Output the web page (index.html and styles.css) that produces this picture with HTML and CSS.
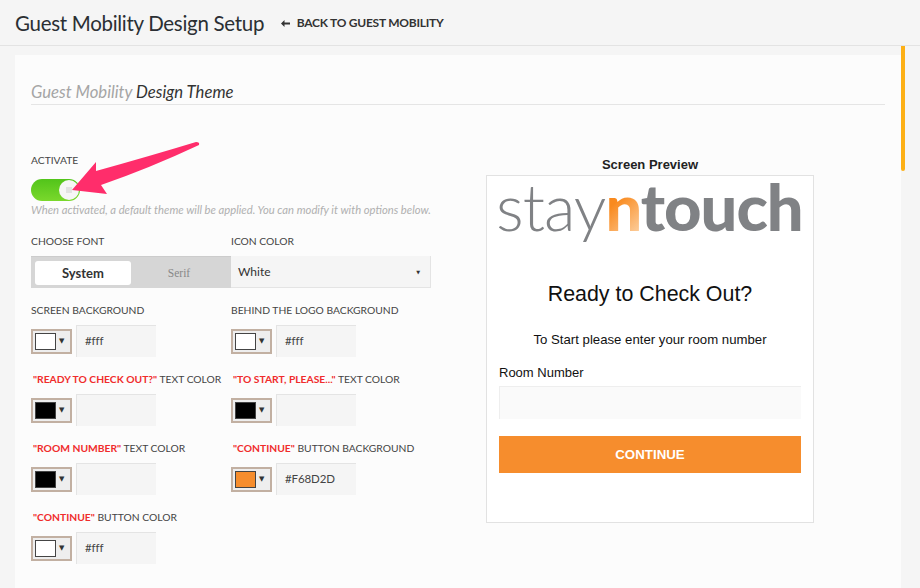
FILE: index.html
```html
<!DOCTYPE html>
<html lang="en">
<head>
  <meta charset="UTF-8">
  <title>Guest Mobility Design Setup</title>
  <link rel="stylesheet" href="styles.css">
</head>
<body>
  <header class="top-bar">
    <h1 class="page-title">Guest Mobility Design Setup</h1>
    <a class="back-link" href="#">
      <svg class="back-arrow" width="9" height="7" viewBox="0 0 9 7"><path d="M0 3.5 L3.5 0 V2.5 H9 V4.5 H3.5 V7 Z" fill="#333"/></svg>
      BACK TO GUEST MOBILITY
    </a>
  </header>

  <main class="panel">
    <h2 class="section-title"><span class="muted">Guest Mobility</span> Design Theme</h2>

    <div class="columns">
      <section class="form">
        <div class="field-label">ACTIVATE</div>
        <div class="toggle"><span class="knob"></span></div>
        <p class="hint">When activated, a default theme will be applied. You can modify it with options below.</p>

        <div class="grid">
          <div class="field">
            <div class="field-label">CHOOSE FONT</div>
            <div class="font-switch">
              <span class="font-on">System</span>
              <span class="font-off">Serif</span>
            </div>
          </div>
          <div class="field">
            <div class="field-label">ICON COLOR</div>
            <div class="select">White<span class="caret">&#9660;</span></div>
          </div>

          <div class="field">
            <div class="field-label">SCREEN BACKGROUND</div>
            <div class="color-row">
              <div class="picker"><span class="swatch white"></span><span class="picker-caret">&#9660;</span></div>
              <div class="color-input">#fff</div>
            </div>
          </div>
          <div class="field">
            <div class="field-label">BEHIND THE LOGO BACKGROUND</div>
            <div class="color-row">
              <div class="picker"><span class="swatch white"></span><span class="picker-caret">&#9660;</span></div>
              <div class="color-input">#fff</div>
            </div>
          </div>

          <div class="field">
            <div class="field-label"><b>"READY TO CHECK OUT?"</b> TEXT COLOR</div>
            <div class="color-row">
              <div class="picker"><span class="swatch black"></span><span class="picker-caret">&#9660;</span></div>
              <div class="color-input"></div>
            </div>
          </div>
          <div class="field">
            <div class="field-label"><b>"TO START, PLEASE..."</b> TEXT COLOR</div>
            <div class="color-row">
              <div class="picker"><span class="swatch black"></span><span class="picker-caret">&#9660;</span></div>
              <div class="color-input"></div>
            </div>
          </div>

          <div class="field">
            <div class="field-label"><b>"ROOM NUMBER"</b> TEXT COLOR</div>
            <div class="color-row">
              <div class="picker"><span class="swatch black"></span><span class="picker-caret">&#9660;</span></div>
              <div class="color-input"></div>
            </div>
          </div>
          <div class="field">
            <div class="field-label"><b>"CONTINUE"</b> BUTTON BACKGROUND</div>
            <div class="color-row">
              <div class="picker"><span class="swatch orange"></span><span class="picker-caret">&#9660;</span></div>
              <div class="color-input">#F68D2D</div>
            </div>
          </div>

          <div class="field">
            <div class="field-label"><b>"CONTINUE"</b> BUTTON COLOR</div>
            <div class="color-row">
              <div class="picker"><span class="swatch white"></span><span class="picker-caret">&#9660;</span></div>
              <div class="color-input">#fff</div>
            </div>
          </div>
        </div>
      </section>

      <section class="preview">
        <div class="preview-title">Screen Preview</div>
        <div class="preview-box">
          <div class="logo"><span class="logo-stay">stay</span><span class="logo-n">n</span><span class="logo-touch">touch</span></div>
          <div class="preview-heading">Ready to Check Out?</div>
          <p class="preview-text">To Start please enter your room number</p>
          <div class="preview-label">Room Number</div>
          <div class="preview-input"></div>
          <div class="preview-button">CONTINUE</div>
        </div>
      </section>
    </div>

    <div class="scroll-thumb"></div>
  </main>

  <svg class="callout" width="220" height="70" viewBox="0 0 220 70">
    <path d="M72 60 L96 32 L96 41 Q150 26 196 12 Q200 12 199 15 Q150 38 101 55 L107 64 Z" fill="#ff2d6b"/>
  </svg>
</body>
</html>
```

FILE: styles.css
```css
html, body {
    margin: 0;
    height: 100%;
}

body {
    position: relative;
    height: 588px;
    overflow: hidden;
    background-color: #f5f5f5;
    font-family: Lato, "Open Sans", sans-serif;
    color: #333;
}

.top-bar {
    display: flex;
    align-items: center;
    height: 45px;
    padding-left: 15px;
    border-bottom: 1px solid #e3e3e3;
}

.page-title {
    margin: 0;
    font-size: 20.5px;
    font-weight: 400;
    letter-spacing: -0.3px;
    color: #2b2f33;
}

.back-link {
    margin-left: 17px;
    font-size: 12px;
    font-weight: 700;
    letter-spacing: -0.25px;
    color: #333;
    text-decoration: none;
}

.back-arrow {
    margin-right: 4px;
}

.panel {
    position: relative;
    height: 533px;
    margin: 9px 19px 0 15px;
    padding: 0 16px;
    background-color: #fcfcfc;
}

.section-title {
    margin: 0;
    padding: 27px 0 1px;
    height: 21px;
    border-bottom: 1px solid #e5e5e5;
    font-size: 16.7px;
    font-style: italic;
    font-weight: 400;
    line-height: 21px;
    color: #333;
}

.muted {
    color: #a5a5a5;
}

.columns {
    display: flex;
}

.form {
    width: 400px;
    padding-top: 48px;
}

.field-label {
    height: 15px;
    font-size: 10.3px;
    line-height: 15px;
    white-space: nowrap;
    color: #444;
}

.field-label b {
    margin-left: 2px;
    color: #f02c2c;
}

.toggle {
    position: relative;
    width: 49px;
    height: 22px;
    margin-top: 11px;
    border-radius: 11px;
    background: linear-gradient(#52c41a, #7ad82c);
}

.knob {
    position: absolute;
    top: 1px;
    right: 1px;
    width: 20px;
    height: 20px;
    border-radius: 50%;
    background-color: #f6f6f6;
}

.knob::after {
    content: "";
    position: absolute;
    top: 7px;
    left: 7px;
    width: 6px;
    height: 6px;
    background-color: #e2e2e2;
}

.hint {
    margin: 1px 0 0;
    height: 16px;
    font-size: 11.25px;
    font-style: italic;
    line-height: 16px;
    white-space: nowrap;
    color: #b0b0b0;
}

.grid {
    display: grid;
    grid-template-columns: 200px 200px;
    row-gap: 15px;
    margin-top: 16px;
}

.font-switch {
    box-sizing: border-box;
    display: flex;
    align-items: center;
    height: 32px;
    margin-top: 7px;
    padding: 0 4px;
    border-top: 1px solid #ccc;
    background-color: #d6d6d6;
}

.font-on {
    width: 96px;
    height: 24px;
    border-radius: 3px;
    background-color: #fff;
    font-size: 13px;
    font-weight: 700;
    line-height: 24px;
    text-align: center;
    color: #333;
}

.font-off {
    flex: 1;
    font-family: "Liberation Serif", serif;
    font-size: 11.5px;
    text-align: center;
    color: #888;
}

.select {
    box-sizing: border-box;
    display: flex;
    justify-content: space-between;
    align-items: center;
    height: 32px;
    margin-top: 7px;
    padding: 0 10px 0 7px;
    border-right: 1px solid #e4e4e4;
    border-bottom: 1px solid #e4e4e4;
    background-color: #f5f5f5;
    font-size: 12px;
    color: #333;
}

.caret {
    font-family: "DejaVu Sans", sans-serif;
    font-size: 5px;
}

.color-row {
    display: flex;
    align-items: center;
    gap: 4px;
    height: 32px;
    margin-top: 7px;
}

.picker {
    display: flex;
    align-items: center;
    box-sizing: border-box;
    width: 41px;
    height: 25px;
    padding: 2px;
    border: 2px solid #c2b0a2;
    background-color: #eee;
}

.swatch {
    box-sizing: border-box;
    width: 21px;
    height: 17px;
    border: 1px solid #444;
}

.white {
    background-color: #fff;
}

.black {
    background-color: #000;
}

.orange {
    background-color: #f68d2d;
}

.picker-caret {
    margin-left: 3px;
    font-family: "DejaVu Sans", sans-serif;
    font-size: 7px;
    color: #333;
}

.color-input {
    box-sizing: border-box;
    width: 80px;
    height: 32px;
    padding-left: 8px;
    border-top: 1px solid #e4e4e4;
    border-left: 1px solid #e4e4e4;
    background-color: #f5f5f5;
    font-size: 11.5px;
    line-height: 30px;
    letter-spacing: -0.1px;
    color: #444;
}

.preview {
    width: 328px;
    margin-left: 55px;
    padding-top: 52px;
}

.preview-title {
    height: 15px;
    margin-bottom: 3px;
    font-family: "Liberation Sans", Arial, sans-serif;
    font-size: 13px;
    font-weight: 700;
    line-height: 15px;
    text-align: center;
    color: #222;
}

.preview-box {
    box-sizing: border-box;
    height: 348px;
    padding: 0 12px;
    border: 1px solid #e2e2e2;
    background-color: #fff;
    font-family: "Liberation Sans", Arial, sans-serif;
    color: #111;
}

.logo {
    height: 59px;
    margin: 1px 0 0 -3px;
    font-family: Lato, sans-serif;
    font-size: 65px;
    line-height: 59px;
    letter-spacing: -1px;
    white-space: nowrap;
    color: #808285;
}

.logo-stay {
    font-weight: 300;
}

.logo-n {
    font-weight: 900;
    background: linear-gradient(135deg, #f98a1e 40%, #fde0bf);
    -webkit-background-clip: text;
    background-clip: text;
    color: transparent;
}

.logo-touch {
    font-weight: 900;
}

.preview-heading {
    margin-top: 45px;
    font-size: 21.4px;
    line-height: 26px;
    text-align: center;
}

.preview-text {
    margin: 25px 0 0;
    font-size: 13.2px;
    line-height: 16px;
    text-align: center;
}

.preview-label {
    margin-top: 17px;
    font-size: 13px;
    line-height: 16px;
}

.preview-input {
    box-sizing: border-box;
    height: 33px;
    margin-top: 5px;
    border-top: 1px solid #eee;
    border-left: 1px solid #eee;
    background-color: #fafafa;
}

.preview-button {
    height: 37px;
    margin-top: 17px;
    background-color: #f68d2d;
    font-size: 13.3px;
    font-weight: 700;
    line-height: 37px;
    text-align: center;
    color: #fff;
}

.scroll-thumb {
    position: absolute;
    top: -9px;
    right: -4px;
    width: 4px;
    height: 125px;
    border-radius: 0 0 2px 2px;
    background-color: #fdb016;
}

.callout {
    position: absolute;
    top: 130px;
    left: 0;
}
```
